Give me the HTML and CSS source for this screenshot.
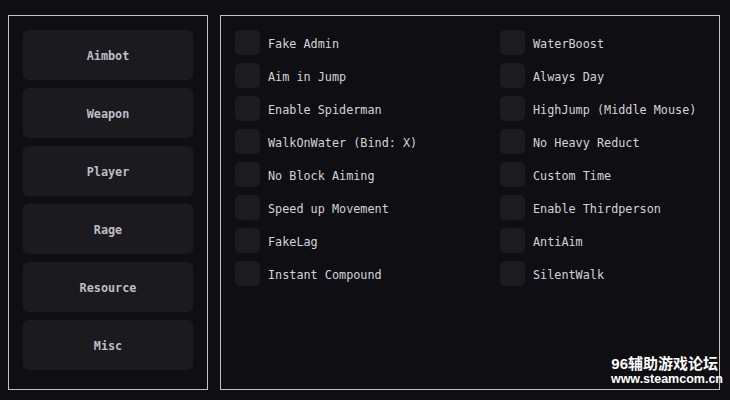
FILE: index.html
```html
<!DOCTYPE html>
<html lang="en">
<head>
    <meta charset="UTF-8">
    <title>Menu</title>
    <link rel="stylesheet" href="styles.css">
</head>
<body>
    <div class="menu">
        <div class="tabs">
            <div class="tab">Aimbot</div>
            <div class="tab">Weapon</div>
            <div class="tab">Player</div>
            <div class="tab">Rage</div>
            <div class="tab">Resource</div>
            <div class="tab">Misc</div>
        </div>
        <div class="options">
            <div class="option"><span class="check"></span>Fake Admin</div>
            <div class="option"><span class="check"></span>WaterBoost</div>
            <div class="option"><span class="check"></span>Aim in Jump</div>
            <div class="option"><span class="check"></span>Always Day</div>
            <div class="option"><span class="check"></span>Enable Spiderman</div>
            <div class="option"><span class="check"></span>HighJump (Middle Mouse)</div>
            <div class="option"><span class="check"></span>WalkOnWater (Bind: X)</div>
            <div class="option"><span class="check"></span>No Heavy Reduct</div>
            <div class="option"><span class="check"></span>No Block Aiming</div>
            <div class="option"><span class="check"></span>Custom Time</div>
            <div class="option"><span class="check"></span>Speed up Movement</div>
            <div class="option"><span class="check"></span>Enable Thirdperson</div>
            <div class="option"><span class="check"></span>FakeLag</div>
            <div class="option"><span class="check"></span>AntiAim</div>
            <div class="option"><span class="check"></span>Instant Compound</div>
            <div class="option"><span class="check"></span>SilentWalk</div>
        </div>
    </div>
    <div class="watermark">
        <div class="wm-title">96辅助游戏论坛</div>
        <div class="wm-url">www.steamcom.cn</div>
    </div>
</body>
</html>
```

FILE: styles.css
```css
body {
    margin: 0;
    background-color: #0f0e12;
    color: #d4d4d8;
    font-family: "DejaVu Sans Mono", "Liberation Mono", monospace;
    font-size: 11.8px;
}
.menu {
    display: flex;
    gap: 12px;
    padding: 15px 10px 10px 8px;
    height: 375px;
    box-sizing: content-box;
}
.tabs {
    width: 170px;
    height: 345px;
    border: 1px solid #c4c4c8;
    padding: 14px;
    display: flex;
    flex-direction: column;
    gap: 8px;
}
.tab {
    height: 50px;
    flex: none;
    box-sizing: border-box;
    padding-top: 2px;
    background-color: #1b1a1f;
    border-radius: 5px;
    display: flex;
    justify-content: center;
    align-items: center;
    font-weight: bold;
    color: #bebec4;
}
.options {
    width: 470px;
    height: 345px;
    border: 1px solid #c4c4c8;
    padding: 14px;
    display: grid;
    grid-template-columns: 265px 1fr;
    grid-auto-rows: 25px;
    row-gap: 8px;
    align-content: start;
}
.option {
    display: flex;
    align-items: flex-start;
    gap: 8px;
    line-height: 28px;
    white-space: nowrap;
}
.check {
    width: 25px;
    height: 25px;
    flex: none;
    background-color: #1c1b20;
    border-radius: 5px;
}
.watermark {
    position: absolute;
    right: 7px;
    bottom: 13px;
    color: #fff;
    font-weight: bold;
    text-align: right;
    font-family: "Liberation Sans", "Noto Sans CJK SC", sans-serif;
}
.wm-title {
    font-size: 15px;
    line-height: 17px;
    margin-right: 5px;
}
.wm-url {
    font-size: 12.5px;
    line-height: 15px;
}
```
